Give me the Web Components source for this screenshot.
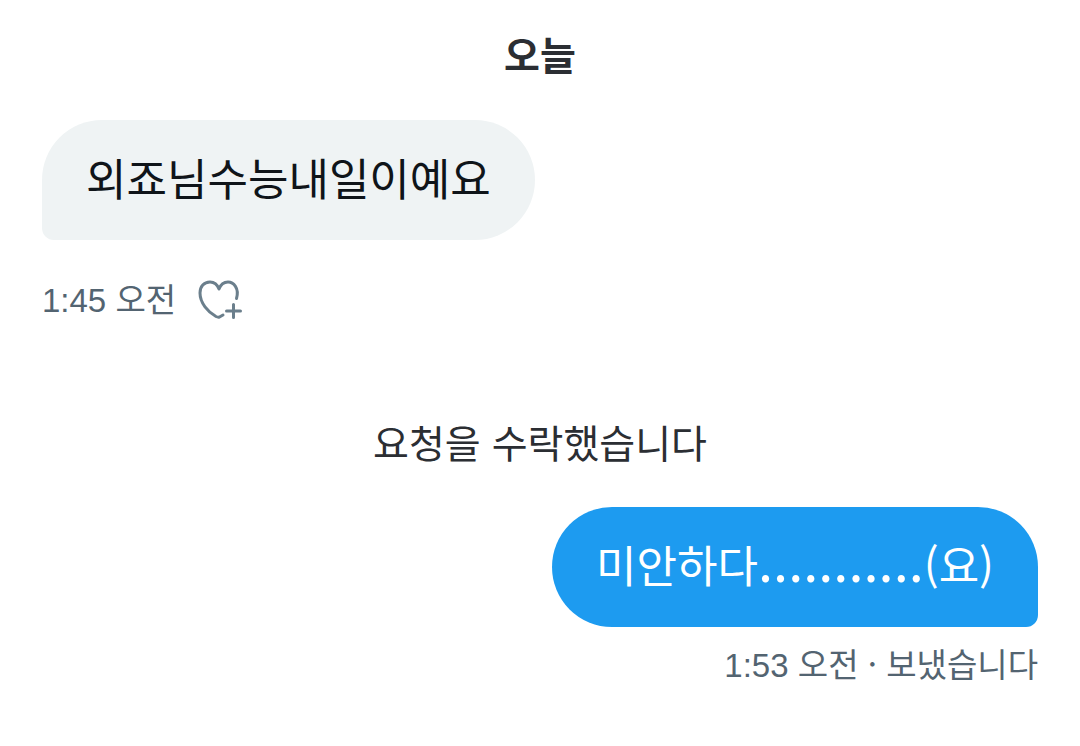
<!DOCTYPE html>
<html lang="ko">
<head>
<meta charset="utf-8">
<meta name="viewport" content="width=device-width, initial-scale=1">
<title>쪽지</title>
<style>
  body { margin: 0; background: #fff; font-family: "Noto Sans CJK KR", sans-serif; }
</style>
</head>
<body>
<dm-thread>
  <dm-day>오늘</dm-day>
  <dm-message>외죠님수능내일이예요
    <dm-time slot="meta" clock="1:45">오전</dm-time>
    <dm-react slot="meta"></dm-react>
  </dm-message>
  <dm-notice>요청을 수락했습니다</dm-notice>
  <dm-message sent>미안하다<dm-dots>...........</dm-dots>(요)
    <dm-time slot="meta" clock="1:53">오전 · 보냈습니다</dm-time>
  </dm-message>
</dm-thread>

<script>
const define = (name, html, setup) => {
  const template = document.createElement('template');
  template.innerHTML = html.trim();
  customElements.define(name, class extends HTMLElement {
    constructor() {
      super();
      this.attachShadow({ mode: 'open' }).append(template.content.cloneNode(true));
    }
    connectedCallback() { if (setup) setup(this); }
  });
};

define('dm-thread', `
  <style>
    :host { display: block; }
    main { display: flex; flex-direction: column; padding: 25px 42px; }
  </style>
  <main><slot></slot></main>`);

define('dm-day', `
  <style>
    :host { display: block; margin-bottom: 39px; text-align: center; }
    h2 { margin: 0; font-size: 39px; line-height: 56px; font-weight: 700; color: #2b2e33; }
  </style>
  <h2><slot></slot></h2>`);

define('dm-notice', `
  <style>
    :host { display: block; margin: 84px 0 38px; text-align: center; }
    p { margin: 0; font-size: 39px; line-height: 56px; color: #2b2e33; }
  </style>
  <p><slot></slot></p>`);

define('dm-message', `
  <style>
    :host { display: flex; flex-direction: column; align-items: flex-start; gap: 30px; }
    :host([sent]) { align-items: flex-end; gap: 8px; }
    .bubble {
      box-sizing: border-box; max-width: 85%; padding: 27px 44px 33px;
      border-radius: 60px 60px 60px 12px; background: #eff3f4; color: #0f1419;
      font-size: 44px; line-height: 60px;
    }
    :host([sent]) .bubble { border-radius: 60px 60px 12px 60px; background: #1d9bf0; color: #fff; }
    .meta { display: flex; align-items: center; gap: 22px; }
  </style>
  <div class="bubble"><slot></slot></div>
  <div class="meta"><slot name="meta"></slot></div>`);

define('dm-dots', `<style>:host { font-size: 54px; line-height: 0; }</style><slot></slot>`);

define('dm-time', `
  <style>
    :host { display: block; font-size: 33px; line-height: 56px; color: #536471; }
    time { font-family: "Liberation Sans", sans-serif; }
  </style>
  <time></time> <slot></slot>`,
  el => { el.shadowRoot.querySelector('time').textContent = el.getAttribute('clock'); });

define('dm-react', `
  <style>
    :host { display: block; }
    button { display: block; padding: 0; border: 0; background: none; color: #6b7f8c; cursor: pointer; }
    svg { display: block; }
  </style>
  <button type="button" aria-label="반응 추가">
    <svg width="46" height="42" viewBox="0 0 46 42" fill="none" stroke="currentColor" stroke-width="3" stroke-linecap="round" stroke-linejoin="round">
      <path d="M38.500 19.500C41.500 9 35.500 3 30 3C25.500 3 22.500 6 21 10C19.500 6 16.500 3 12 3C6 3 2 7.500 2 14C2 24 10 33 18 37.500Q20 38.500 21.500 38L25 36"/>
      <path d="M35.500 25.500V38.500M28.500 32H42.500"/>
    </svg>
  </button>`);
</script>
</body>
</html>
